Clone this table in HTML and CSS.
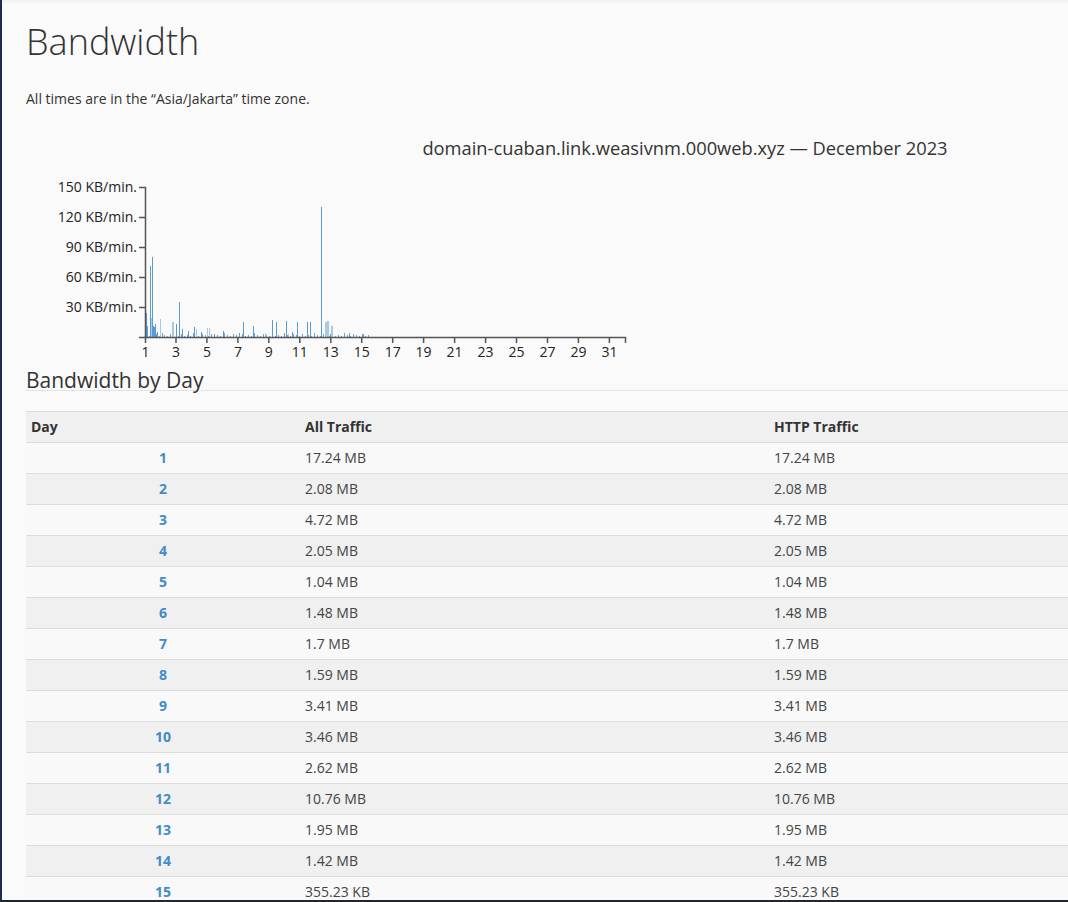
FILE: index.html
```html
<!DOCTYPE html>
<html lang="en">
<head>
<meta charset="utf-8">
<title>Bandwidth</title>
<link rel="stylesheet" href="styles.css">
</head>
<body>
<div class="page">
  <h1 class="title">Bandwidth</h1>
  <p class="tz">All times are in the “Asia/Jakarta” time zone.</p>
  <div class="chart-title">domain-cuaban.link.weasivnm.000web.xyz — December 2023</div>
  <svg class="chart" width="640" height="204" viewBox="0 0 640 204" xmlns="http://www.w3.org/2000/svg">
    <g class="bars-noise">
      <path d="M121.5 176v-2M123.5 176v-1M125.5 176v-3M128.5 176v-1M131.5 176v-2M133.5 176v-1M136.5 176v-4M138.5 176v-2M141.5 176v-1M144.5 176v-3M147.5 176v-2M152.5 176v-1M155.5 176v-3M158.5 176v-1M161.5 176v-2M164.5 176v-1M167.5 176v-4M170.5 176v-2M172.5 176v-1M176.5 176v-3M179.5 176v-2M182.5 176v-1M185.5 176v-3M188.5 176v-1M191.5 176v-2M194.5 176v-1M198.5 176v-4M201.5 176v-2M204.5 176v-1M207.5 176v-3M210.5 176v-2M213.5 176v-1M216.5 176v-3M219.5 176v-1M222.5 176v-2M225.5 176v-1M228.5 176v-4M231.5 176v-2M234.5 176v-1M237.5 176v-3M240.5 176v-2M243.5 176v-1M246.5 176v-3M249.5 176v-1M252.5 176v-2M255.5 176v-1M258.5 176v-4M261.5 176v-2M264.5 176v-1M267.5 176v-3M270.5 176v-2M273.5 176v-1M276.5 176v-3M279.5 176v-1M282.5 176v-2M285.5 176v-1M288.5 176v-4M291.5 176v-2M294.5 176v-1M297.5 176v-3M300.5 176v-2M303.5 176v-1M306.5 176v-3M309.5 176v-1M312.5 176v-2M315.5 176v-1M318.5 176v-4M321.5 176v-2M324.5 176v-1M327.5 176v-3M330.5 176v-2M333.5 176v-1M336.5 176v-3M339.5 176v-1M342.5 176v-2"/>
    </g>
    <g class="bars-light">
      <path d="M125.5 176v-19M134.5 176v-18M146.5 176v-15M147.5 176v-15M181.5 176v-9M183.5 176v-9M299.5 176v-15M300.5 176v-15M301.5 176v-16M302.5 176v-16M305.5 176v-11M306.5 176v-11M170.5 176v-8M239.5 176v-4M262.5 176v-3"/>
    </g>
    <g class="bars-dark">
      <path d="M119.5 176v-27M120.5 176v-24M121.5 176v-11M124.5 176v-71M126.5 176v-80M127.5 176v-11M128.5 176v-10M129.5 176v-13M130.5 176v-3M131.5 176v-5M150.5 176v-13M153.5 176v-35M156.5 176v-8M162.5 176v-6M168.5 176v-10M175.5 176v-5M197.5 176v-6M217.5 176v-15M227.5 176v-11M246.5 176v-17M250.5 176v-15M260.5 176v-16M271.5 176v-15M281.5 176v-15M284.5 176v-15M295.5 176v-130M304.5 176v-3M323.5 176v-4M337.5 176v-3M213.5 176v-4M188.5 176v-3M266.5 176v-5M258.5 176v-3"/>
    </g>
    <g class="axis">
      <path d="M113 26.5H119.5V176.5H113"/>
      <path d="M113 56.5H119M113 86.5H119M113 116.5H119M113 146.5H119"/>
      <path d="M119.5 182V176.5H599.5V182"/>
      <path d="M150 176v6M180.9 176v6M211.9 176v6M242.8 176v6M273.8 176v6M304.8 176v6M335.7 176v6M366.7 176v6M397.6 176v6M428.6 176v6M459.6 176v6M490.5 176v6M521.5 176v6M552.4 176v6M583.4 176v6"/>
    </g>
    <g class="ylabels">
      <text x="111" y="31">150 KB/min.</text>
      <text x="111" y="61">120 KB/min.</text>
      <text x="111" y="91">90 KB/min.</text>
      <text x="111" y="121">60 KB/min.</text>
      <text x="111" y="151">30 KB/min.</text>
    </g>
    <g class="xlabels">
      <text x="119.5" y="196">1</text>
      <text x="150" y="196">3</text>
      <text x="180.9" y="196">5</text>
      <text x="211.9" y="196">7</text>
      <text x="242.8" y="196">9</text>
      <text x="273.8" y="196">11</text>
      <text x="304.8" y="196">13</text>
      <text x="335.7" y="196">15</text>
      <text x="366.7" y="196">17</text>
      <text x="397.6" y="196">19</text>
      <text x="428.6" y="196">21</text>
      <text x="459.6" y="196">23</text>
      <text x="490.5" y="196">25</text>
      <text x="521.5" y="196">27</text>
      <text x="552.4" y="196">29</text>
      <text x="583.4" y="196">31</text>
    </g>
  </svg>
  <h2 class="section">Bandwidth by Day</h2>
  <table class="days">
    <colgroup><col class="c-day"><col class="c-all"><col class="c-http"></colgroup>
    <thead>
      <tr><th>Day</th><th>All Traffic</th><th>HTTP Traffic</th></tr>
    </thead>
    <tbody>
      <tr><td class="day">1</td><td>17.24 MB</td><td>17.24 MB</td></tr>
      <tr><td class="day">2</td><td>2.08 MB</td><td>2.08 MB</td></tr>
      <tr><td class="day">3</td><td>4.72 MB</td><td>4.72 MB</td></tr>
      <tr><td class="day">4</td><td>2.05 MB</td><td>2.05 MB</td></tr>
      <tr><td class="day">5</td><td>1.04 MB</td><td>1.04 MB</td></tr>
      <tr><td class="day">6</td><td>1.48 MB</td><td>1.48 MB</td></tr>
      <tr><td class="day">7</td><td>1.7 MB</td><td>1.7 MB</td></tr>
      <tr><td class="day">8</td><td>1.59 MB</td><td>1.59 MB</td></tr>
      <tr><td class="day">9</td><td>3.41 MB</td><td>3.41 MB</td></tr>
      <tr><td class="day">10</td><td>3.46 MB</td><td>3.46 MB</td></tr>
      <tr><td class="day">11</td><td>2.62 MB</td><td>2.62 MB</td></tr>
      <tr><td class="day">12</td><td>10.76 MB</td><td>10.76 MB</td></tr>
      <tr><td class="day">13</td><td>1.95 MB</td><td>1.95 MB</td></tr>
      <tr><td class="day">14</td><td>1.42 MB</td><td>1.42 MB</td></tr>
      <tr><td class="day">15</td><td>355.23 KB</td><td>355.23 KB</td></tr>
    </tbody>
  </table>
</div>
<div class="frame-edge"></div>
</body>
</html>
```
FILE: styles.css
```css
html, body {
  margin: 0;
  padding: 0;
  height: 902px;
  overflow: hidden;
  background: #fafafa;
}
body {
  font-family: "Open Sans", "Liberation Sans", sans-serif;
  color: #333;
}
.page {
  width: 1318px;
  padding: 22px 0 0 26px;
}
.title {
  margin: 0;
  font-size: 36px;
  line-height: 40px;
  font-weight: 300;
  color: #333;
}
.tz {
  margin: 28px 0 0;
  font-size: 14px;
  line-height: 18px;
  color: #333;
}
.chart-title {
  margin-top: 28px;
  font-size: 18.3px;
  line-height: 24px;
  text-align: center;
  color: #333;
}
.chart {
  display: block;
  margin-top: 1px;
}
.bars-noise path {
  fill: none;
  stroke: #3f88c5;
  stroke-width: 1;
  opacity: 0.75;
}
.bars-light path {
  fill: none;
  stroke: #a9c9e5;
  stroke-width: 1;
}
.bars-dark path {
  fill: none;
  stroke: #5a9bd2;
  stroke-width: 1;
}
.axis path {
  fill: none;
  stroke: #555;
  stroke-width: 1.5;
}
.ylabels text {
  font-family: "Open Sans", "Liberation Sans", sans-serif;
  font-size: 14px;
  fill: #222;
  text-anchor: end;
}
.xlabels text {
  font-family: "Open Sans", "Liberation Sans", sans-serif;
  font-size: 14px;
  fill: #222;
  text-anchor: middle;
}
.section {
  margin: 5px 0 0;
  font-size: 21px;
  line-height: 20px;
  font-weight: 400;
  color: #333;
  border-bottom: 1px solid #e3e3e3;
}
.days {
  margin-top: 20px;
  width: 100%;
  border-collapse: collapse;
  font-size: 14px;
  line-height: 18px;
}
.c-day { width: 274px; }
.c-all { width: 469px; }
.days th, .days td {
  padding: 6px 5px;
  border-top: 1px solid #dcdcdc;
  text-align: left;
  color: #444;
}
.days th {
  font-weight: 700;
  color: #333;
  background: #f0f0f0;
}
.days tbody tr:nth-child(odd) td { background: #f9f9f9; }
.days tbody tr:nth-child(even) td { background: #f0f0f0; }
.days td.day {
  text-align: center;
  font-weight: 700;
  color: #428bca;
}
.frame-edge {
  position: fixed;
  left: 0;
  top: 0;
  right: 0;
  bottom: 0;
  border-left: 2px solid #1f2a52;
  border-bottom: 2px solid #23252c;
  box-shadow: inset 0 4px 4px -3px rgba(0, 0, 0, 0.06);
  pointer-events: none;
}
```
